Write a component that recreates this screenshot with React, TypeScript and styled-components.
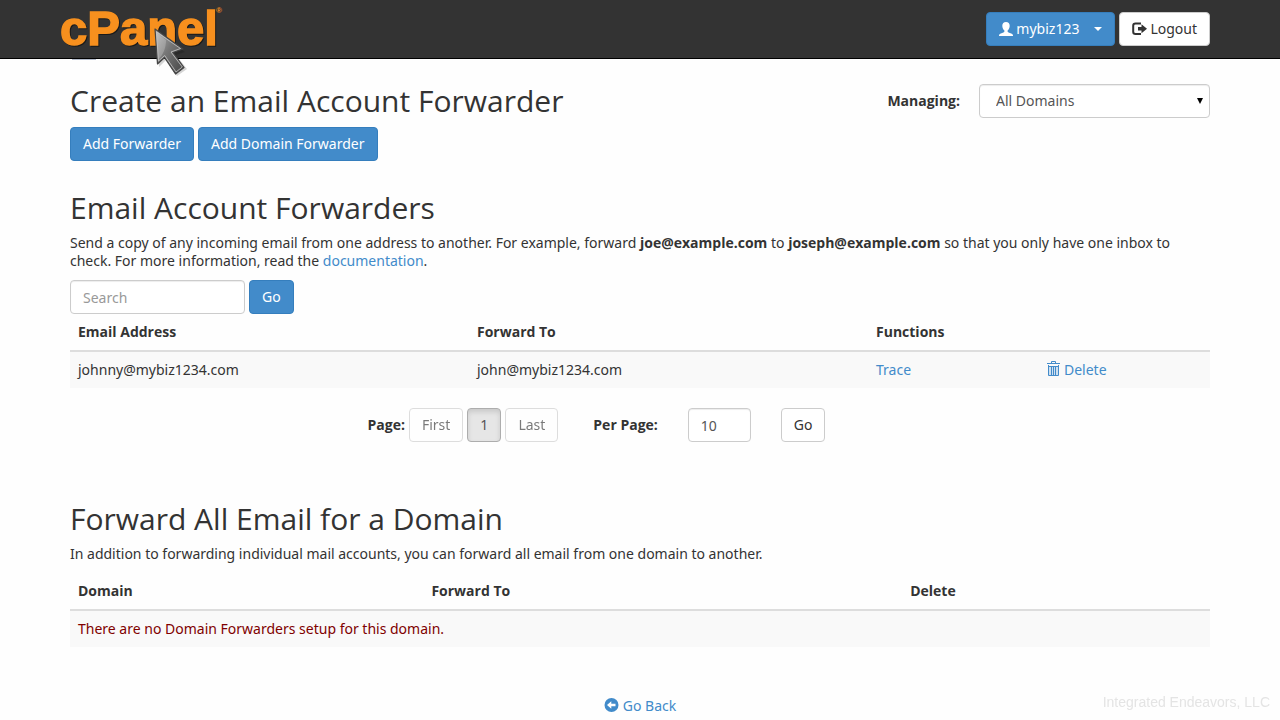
import React, { useState } from 'react';
import styled, { createGlobalStyle, css } from 'styled-components';

const GlobalStyle = createGlobalStyle`
  *, *::before, *::after { box-sizing: border-box; }
  body {
    margin: 0;
    background: #fefefe;
    color: #333;
    font-family: 'Noto Sans', 'Open Sans', sans-serif;
    font-size: 14px;
    line-height: 18px;
  }
  h1, h2, b, th, label { font-family: 'Open Sans', 'Noto Sans', sans-serif; }
  button, input, select { font: inherit; color: inherit; }
`;

const Container = styled.div`
  max-width: 1170px;
  margin: 0 auto;
  padding: 0 15px;
`;

const Header = styled.header`
  position: relative;
  background: #333;
  border-bottom: 1px solid #000;
`;

const HeaderRow = styled.div`
  display: flex;
  align-items: center;
  justify-content: space-between;
  height: 58px;
`;

const LogoLink = styled.a`
  display: block;
  height: 58px;
  margin-left: -10px;
`;

const HeaderActions = styled.div`
  display: flex;
  gap: 4px;
`;

const FocusSliver = styled.span`
  position: absolute;
  top: 59px;
  left: 72px;
  width: 24px;
  height: 1px;
  background: #b4bccb;
`;

const variants = {
  primary: css`
    background: #428bca;
    border-color: #357ebd;
    color: #fff;
  `,
  plain: css`
    background: #fff;
    border-color: #ccc;
    color: #333;
  `,
  active: css`
    background: #e6e6e6;
    border-color: #adadad;
    color: #555;
    box-shadow: inset 0 3px 5px rgba(0, 0, 0, 0.125);
  `,
};

const Button = styled.button<{ $variant?: keyof typeof variants }>`
  display: inline-flex;
  align-items: center;
  gap: 3px;
  height: 34px;
  padding: 0 12px;
  border: 1px solid;
  border-radius: 4px;
  line-height: 20px;
  white-space: nowrap;
  cursor: pointer;
  ${({ $variant = 'plain' }) => variants[$variant]}
  &:disabled { opacity: 0.65; cursor: not-allowed; }
`;

const UserName = styled.span`
  margin-right: 12px;
`;

const Caret = styled.span`
  border: 4px solid transparent;
  border-top-color: currentColor;
  border-bottom: 0;
`;

const TitleRow = styled.div`
  display: flex;
  justify-content: space-between;
  align-items: flex-start;
  padding-top: 25px;
`;

const Heading = styled.h2`
  margin: 0 0 10px;
  font-size: 30px;
  line-height: 33px;
  font-weight: 400;
`;

const Managing = styled.div`
  display: flex;
  align-items: center;
  gap: 19px;
`;

const Label = styled.label`
  font-weight: 700;
`;

const SelectBox = styled.div`
  position: relative;
  width: 231px;
  &::after {
    content: '';
    position: absolute;
    right: 7px;
    top: 14px;
    border: 3px solid transparent;
    border-top: 6px solid #000;
    border-bottom: 0;
    pointer-events: none;
  }
`;

const control = css`
  height: 34px;
  border: 1px solid #ccc;
  border-radius: 4px;
  background: #fff;
  color: #555;
  box-shadow: inset 0 1px 1px rgba(0, 0, 0, 0.075);
`;

const Select = styled.select`
  ${control}
  width: 100%;
  padding: 0 16px;
  appearance: none;
`;

const TextBox = styled.input<{ $width: number }>`
  ${control}
  width: ${({ $width }) => $width}px;
  padding: 0 12px;
  &::placeholder { color: #999; opacity: 1; }
`;

const ButtonRow = styled.div`
  display: flex;
  gap: 4px;
`;

const Section = styled.section<{ $space: number }>`
  margin-top: ${({ $space }) => $space}px;
`;

const Text = styled.p`
  margin: 0 0 10px;
`;

const Link = styled.a`
  color: #428bca;
  text-decoration: none;
  &:hover { text-decoration: underline; }
`;

const IconLink = styled(Link)`
  display: inline-flex;
  align-items: center;
  gap: 4px;
  vertical-align: top;
`;

const Table = styled.table`
  width: 100%;
  border-collapse: separate;
  border-spacing: 0;
  table-layout: fixed;
  line-height: 20px;
`;

const HeadCell = styled.th<{ $width?: number }>`
  width: ${({ $width }) => ($width ? `${$width}%` : 'auto')};
  padding: 8px;
  border-bottom: 2px solid #ddd;
  text-align: left;
`;

const Cell = styled.td<{ $alert?: boolean }>`
  padding: 8px;
  background: #f9f9f9;
  color: ${({ $alert }) => ($alert ? '#800000' : 'inherit')};
`;

const Pager = styled.div`
  display: flex;
  justify-content: center;
  align-items: center;
  margin-top: 20px;
  padding-right: 87px;
`;

const PageGroup = styled.div`
  display: flex;
  align-items: center;
  gap: 4px;
  margin-right: 35px;
`;

const PerPageForm = styled.form`
  display: flex;
  align-items: center;
  gap: 30px;
`;

const Back = styled.nav`
  display: flex;
  justify-content: center;
  padding: 50px 0 4px;
`;

const Watermark = styled.div`
  position: fixed;
  right: 10px;
  bottom: 9px;
  color: #e4e4e4;
  font: 14px/18px 'Liberation Sans', sans-serif;
`;

const Pointer = styled.svg`
  position: absolute;
  z-index: 1;
  top: 27px;
  left: 82px;
  pointer-events: none;
`;

const LogoArea = styled.div`
  position: relative;
`;

const Logo = () => (
  <svg width="168" height="58" viewBox="0 0 168 58" role="img" aria-label="cPanel">
    <g fontFamily="Liberation Sans, Arial, sans-serif" fontWeight="700">
      <text x="0" y="45" fontSize="49" fill="#f7901e" stroke="#f7901e" strokeWidth="1.500" style={{ filter: 'drop-shadow(1px 1px 0 #1a1a1a)' }}>cPanel</text>
      <text x="156" y="13" fontSize="8" fill="#f7901e">®</text>
    </g>
  </svg>
);

const UserIcon = () => (
  <svg width="14" height="14" viewBox="0 0 14 14" fill="currentColor" aria-hidden="true">
    <path d="M7 0C4.600 0 3.300 1.500 3.300 3.700c0 2 .9 3.900 2.100 4.800v1.100c0 .5-.4.8-1 1L1.200 11.800C.4 12.100 0 12.700 0 13.400V14h14v-.6c0-.7-.4-1.300-1.200-1.600L9.600 10.600c-.6-.2-1-.5-1-1V8.500c1.200-.9 2.100-2.800 2.100-4.800C10.700 1.500 9.400 0 7 0Z" />
  </svg>
);

const LogoutIcon = () => (
  <svg width="15" height="14" viewBox="0 0 15 14" aria-hidden="true">
    <path d="M9 1.500H3.500a2.300 2.300 0 0 0-2.300 2.300v5.900a2.300 2.300 0 0 0 2.300 2.300H9" fill="none" stroke="currentColor" strokeWidth="2" />
    <path d="M6 5h3.500V2.200L15 6.700l-5.500 4.500V8.500H6Z" fill="currentColor" />
  </svg>
);

const TrashIcon = () => (
  <svg width="13" height="18" viewBox="0 0 13 18" fill="none" stroke="currentColor" aria-hidden="true">
    <rect x="1" y="5" width="11" height="9" fill="#cfe0f0" stroke="none" />
    <path d="M0 2.500h13M4.500 2.500v-2h4v2M1.500 4v10.500h10V4M1 5.500h11M4.500 5v9M6.500 5v9M8.500 5v9" />
  </svg>
);

const BackIcon = () => (
  <svg width="15" height="16" viewBox="0 0 15 16" aria-hidden="true">
    <circle cx="7.500" cy="7" r="7" fill="currentColor" />
    <path d="M3 7 7.300 3.300V5.800H11.500V8.200H7.300V10.700Z" fill="#fff" />
  </svg>
);

const MousePointer = () => (
  <Pointer width="42" height="54" viewBox="0 0 42 54" aria-hidden="true">
    <defs>
      <linearGradient id="steel" x1="0" y1="0" x2="1" y2="1">
        <stop offset="0" stopColor="#b5b5b5" />
        <stop offset="0.45" stopColor="#777" />
        <stop offset="1" stopColor="#444" />
      </linearGradient>
    </defs>
    <path d="M5 5 7 40 14 33 25 49 35 42 24 28 33 25Z" fill="#000" opacity="0.16" />
    <path d="M3 2 5.500 37 12.500 30.500 23.500 47 32 40.500 21 25.500 31 22Z" fill="url(#steel)" stroke="#444" strokeWidth="1.200" strokeLinejoin="round" />
    <path d="M4.500 5 6.500 34 12.700 28.500 24 45 30.300 40 19 25 28.500 21.500Z" fill="none" stroke="#c8c8c8" strokeWidth="0.800" />
    <path d="M5 6 6.800 32C11 28 14 21 14 13Z" fill="#fff" opacity="0.22" />
  </Pointer>
);

export default function App() {
  const [perPage, setPerPage] = useState('10');
  const [query, setQuery] = useState('');

  return (
    <>
      <GlobalStyle />
      <Header>
        <FocusSliver />
        <Container>
          <HeaderRow>
            <LogoArea>
              <LogoLink href="#home"><Logo /></LogoLink>
              <MousePointer />
            </LogoArea>
            <HeaderActions>
              <Button $variant="primary" type="button" aria-haspopup="menu">
                <UserIcon /><UserName>mybiz123</UserName><Caret />
              </Button>
              <Button type="button"><LogoutIcon />Logout</Button>
            </HeaderActions>
          </HeaderRow>
        </Container>
      </Header>

      <Container as="main">
        <TitleRow>
          <Heading as="h1">Create an Email Account Forwarder</Heading>
          <Managing>
            <Label htmlFor="domain">Managing:</Label>
            <SelectBox>
              <Select id="domain"><option>All Domains</option></Select>
            </SelectBox>
          </Managing>
        </TitleRow>
        <ButtonRow>
          <Button $variant="primary" type="button">Add Forwarder</Button>
          <Button $variant="primary" type="button">Add Domain Forwarder</Button>
        </ButtonRow>

        <Section $space={30}>
          <Heading>Email Account Forwarders</Heading>
          <Text>
            Send a copy of any incoming email from one address to another. For example, forward{' '}
            <b>joe@example.com</b> to <b>joseph@example.com</b> so that you only have one inbox to
            check. For more information, read the <Link href="#documentation">documentation</Link>.
          </Text>
          <ButtonRow as="form">
            <TextBox $width={175} placeholder="Search" aria-label="Search" value={query} onChange={e => setQuery(e.target.value)} />
            <Button $variant="primary" type="button">Go</Button>
          </ButtonRow>
          <Table>
            <thead>
              <tr>
                <HeadCell $width={35}>Email Address</HeadCell>
                <HeadCell $width={35}>Forward To</HeadCell>
                <HeadCell $width={15}>Functions</HeadCell>
                <HeadCell $width={15} />
              </tr>
            </thead>
            <tbody>
              <tr>
                <Cell>johnny@mybiz1234.com</Cell>
                <Cell>john@mybiz1234.com</Cell>
                <Cell><Link href="#trace">Trace</Link></Cell>
                <Cell><IconLink href="#delete"><TrashIcon />Delete</IconLink></Cell>
              </tr>
            </tbody>
          </Table>
          <Pager>
            <PageGroup>
              <b>Page:</b>
              <Button type="button" disabled>First</Button>
              <Button type="button" $variant="active" aria-current="page">1</Button>
              <Button type="button" disabled>Last</Button>
            </PageGroup>
            <PerPageForm>
              <Label htmlFor="per-page">Per Page:</Label>
              <TextBox id="per-page" $width={63} value={perPage} onChange={e => setPerPage(e.target.value)} />
              <Button type="button">Go</Button>
            </PerPageForm>
          </Pager>
        </Section>

        <Section $space={60}>
          <Heading>Forward All Email for a Domain</Heading>
          <Text>In addition to forwarding individual mail accounts, you can forward all email from one domain to another.</Text>
          <Table>
            <thead>
              <tr>
                <HeadCell $width={31}>Domain</HeadCell>
                <HeadCell $width={42}>Forward To</HeadCell>
                <HeadCell>Delete</HeadCell>
              </tr>
            </thead>
            <tbody>
              <tr>
                <Cell colSpan={3} $alert>There are no Domain Forwarders setup for this domain.</Cell>
              </tr>
            </tbody>
          </Table>
        </Section>

        <Back>
          <IconLink href="#back"><BackIcon />Go Back</IconLink>
        </Back>
      </Container>
      <Watermark>Integrated Endeavors, LLC</Watermark>
    </>
  );
}
